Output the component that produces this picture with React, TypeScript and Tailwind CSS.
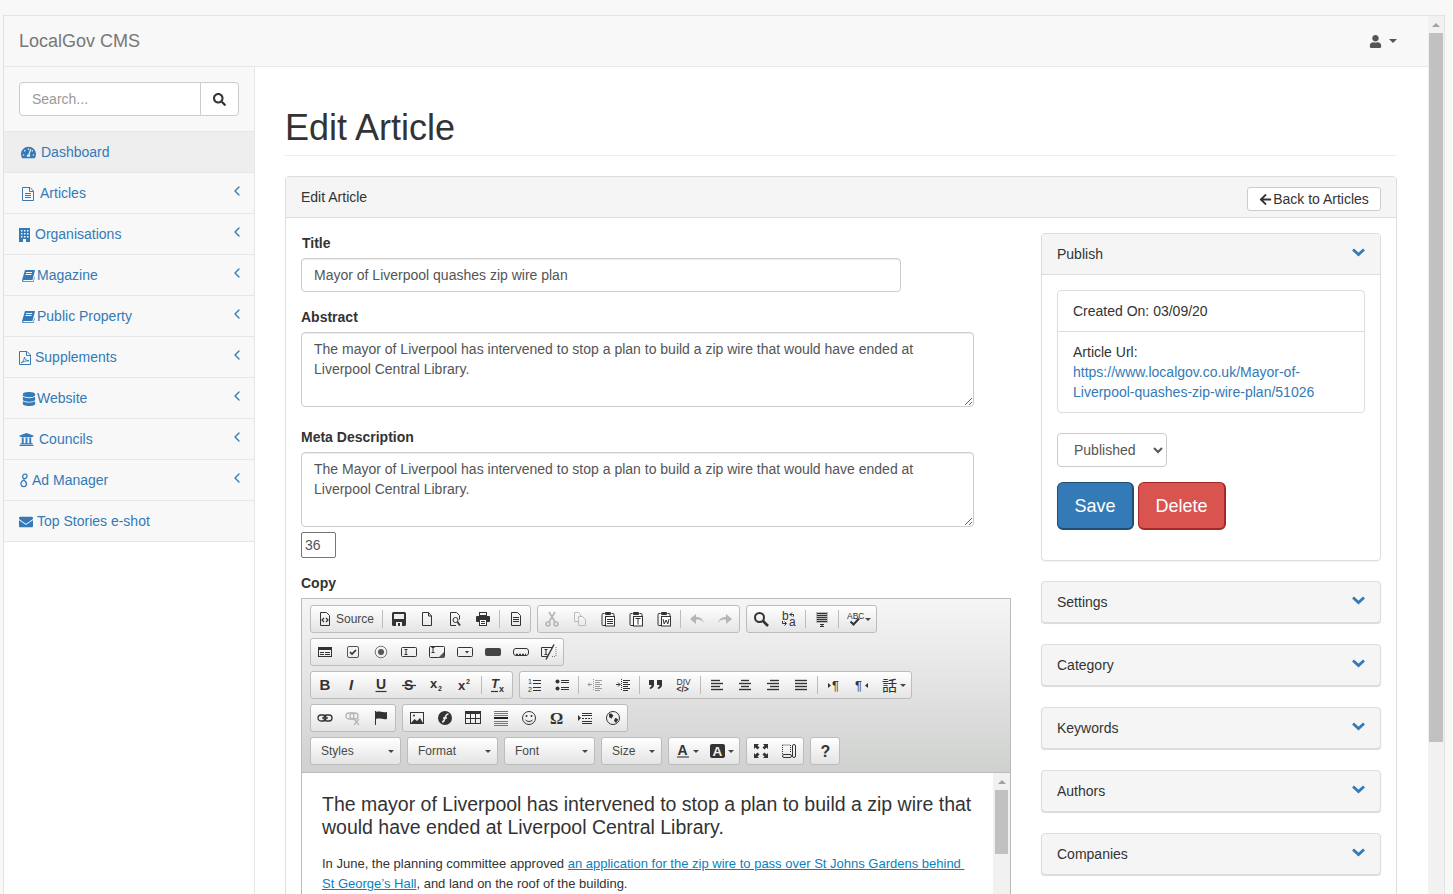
import React from "react";
import { FaDatabase, FaUniversity, FaEnvelope, FaSearch, FaUser, FaArrowLeft, FaTachometerAlt } from "react-icons/fa";
import { ChevronLeft } from "lucide-react";

const ARIAL = "Liberation Sans";
const T = ({ x, y, s, w, it, f, c, children }: any) => (
  <text x={x} y={y} fontSize={s} fontWeight={w || "normal"} fontStyle={it ? "italic" : "normal"} fontFamily={f || ARIAL} fill={c || "#333"} stroke="none">{children}</text>
);
const clip = (inner: React.ReactNode) => (
  <>
    <path d="M4.500 2.500H3a1 1 0 0 0-1 1v10a1 1 0 0 0 1 1h2M11.500 2.500H13a1 1 0 0 1 1 1V5" />
    <rect x="5" y="1" width="6" height="3" rx="1" fill="#333" stroke="none" />
    <rect x="5.500" y="5.500" width="9" height="9.500" fill="#fff" />
    {inner}
  </>
);
const lines = (arr: number[][], sw = 1, col = "#333") => arr.map((a, i) => (
  <path key={i} d={`M${a[0]} ${a[2]}.5H${a[1]}`} strokeWidth={sw} stroke={col} />
));

const ICONS: Record<string, React.ReactNode> = {
  source: <><path d="M3.500 1.500h6l3 3v10h-9z" /><path d="M7 7 5 9l2 2M9 7l2 2-2 2" strokeWidth="1.200" /></>,
  save: <><path d="M1 2.500A1.500 1.500 0 0 1 2.500 1h11A1.500 1.500 0 0 1 15 2.500v11a1.500 1.500 0 0 1-1.500 1.500h-11A1.500 1.500 0 0 1 1 13.500z" fill="#333" stroke="none" /><rect x="3" y="3" width="10" height="5" fill="#eee" stroke="none" /><rect x="5" y="11" width="6" height="4" fill="#eee" stroke="none" /><rect x="7" y="12" width="2" height="3" fill="#333" stroke="none" /></>,
  newpage: <path d="M3.500 1.500h6l3 3.500v9.500h-9zM9.500 1.500V5h3" />,
  preview: <><path d="M9 14.500H3.500v-13h6l3 3v4" /><circle cx="8.500" cy="9" r="2.500" /><path d="m10.500 11 2.500 3.500" strokeWidth="1.800" /></>,
  print: <><rect x="4.500" y="1.500" width="7" height="3" /><rect x="1" y="5" width="14" height="6" rx="1" fill="#333" stroke="none" /><rect x="4.500" y="8.500" width="7" height="6" fill="#fff" />{lines([[6, 10, 10], [6, 10, 12]])}</>,
  templates: <><path d="M3.500 1.500h6l3 3v10h-9z" />{lines([[5, 11, 6], [5, 11, 8], [5, 11, 10]])}</>,
  cut: <g stroke="#b5b5b5"><path d="m5 1 6 10M11 1 5 11" strokeWidth="1.600" /><circle cx="4" cy="13" r="2" strokeWidth="1.600" /><circle cx="12" cy="13" r="2" strokeWidth="1.600" /></g>,
  copy: <g stroke="#bbb"><path d="M6.500 10.500h-4v-9h4l2 2v2" /><path d="M6.500 5.500h4l3 3v6h-7z" /></g>,
  paste: clip(lines([[7, 13, 8], [7, 13, 10], [7, 13, 12]])),
  pastetext: clip(<path d="M7.500 7.500h5M10 7.500v6" />),
  pasteword: clip(<path d="m7 8 1.200 5L10 9l1.800 4L13 8" />),
  undo: <path d="M1 8l6-5v3c4 0 7 2 8 6-2-3-4-3.500-8-3.500V13z" fill="#b5b5b5" stroke="none" />,
  redo: <path d="M15 8 9 3v3c-4 0-7 2-8 6 2-3 4-3.500 8-3.500V13z" fill="#b5b5b5" stroke="none" />,
  find: <><circle cx="6.500" cy="6.500" r="4.500" strokeWidth="2" /><path d="m10 10 5 5" strokeWidth="2.600" /></>,
  replace: <><T x="1" y="8.500" s="12">b</T><T x="8" y="15" s="12">a</T><path d="M8.500 3.500h4v2M11 1.500l-2 2 2 2M1.500 10v2.500H5M3.500 10.500l2 2-2 2" /></>,
  selectall: <><rect x="2" y="1" width="12" height="11" fill="#bbb" stroke="none" />{lines([[3, 13, 2], [3, 13, 4], [3, 13, 6], [3, 13, 8], [3, 13, 10]])}<path d="M6 13.500h4M8 13.500v2M6 15.500h4" /></>,
  spell: <><T x="0" y="7.500" s="8.500">ABC</T><path d="m3.500 10.500 3 3L12 7.500" strokeWidth="2" /></>,
  form: <><rect x="1.500" y="3.500" width="13" height="9" /><rect x="1" y="3" width="14" height="3" fill="#333" stroke="none" /><rect x="3" y="8" width="4" height="1" fill="#333" stroke="none" /><rect x="8" y="8" width="5" height="1" fill="#333" stroke="none" /><rect x="3" y="10" width="4" height="1" fill="#333" stroke="none" /><rect x="8" y="10" width="5" height="1" fill="#333" stroke="none" /></>,
  checkbox: <><rect x="2.500" y="2.500" width="11" height="11" rx="1.500" stroke="#555" /><path d="m5 8 2 2 4-4" strokeWidth="1.700" /></>,
  radio: <><circle cx="8" cy="8" r="5.800" stroke="#777" /><circle cx="8" cy="8" r="3" fill="#555" stroke="none" /></>,
  textfield: <><rect x=".5" y="3.500" width="15" height="9" rx="1" /><path d="M3.500 5.500h3M5 5.500v5M3.500 10.500h3" /></>,
  textarea: <><rect x=".5" y="2.500" width="15" height="11" rx="1" /><path d="M2.500 3.500h3M4 3.500v5M2.500 8.500h3" /><path d="M15 8v6H9z" fill="#555" stroke="none" /></>,
  select: <><rect x=".5" y="3.500" width="15" height="9" rx="1" /><path d="M8 7h4l-2 2.500z" fill="#333" stroke="none" /></>,
  button: <rect x="0" y="4" width="16" height="8" rx="2" fill="#444" stroke="none" />,
  imagebutton: <><rect x=".5" y="4.500" width="15" height="7" rx="2.500" /><path d="M3 10.500h10" strokeDasharray="2 1" strokeWidth="1.500" /></>,
  hidden: <><path d="M.5 3.500h11M.5 3.500v9h6" /><path d="M11 12.500h4M15 3v10" strokeDasharray="1 1" stroke="#777" /><path d="M3.500 5.500h3M5 5.500v5M3.500 10.500h3" /><path d="m5 15.500 8-15" strokeWidth="1.400" /></>,
  bold: <T x="2.500" y="13" s="15" w="bold">B</T>,
  italic: <T x="4" y="13" s="15" w="bold" it>I</T>,
  underline: <><T x="3" y="12" s="14" w="bold">U</T><path d="M2.500 14.500h11" strokeWidth="1.200" /></>,
  strike: <><T x="3" y="13" s="14" w="bold">S</T><path d="M1 8.500h14" strokeWidth="1.200" /></>,
  sub: <><T x="1" y="11" s="13" w="bold">x</T><T x="9" y="14" s="7" w="bold">2</T></>,
  sup: <><T x="1" y="13" s="13" w="bold">x</T><T x="9" y="7" s="7" w="bold">2</T></>,
  removeformat: <><T x="1" y="11" s="13" w="bold" it>T</T><T x="9" y="15" s="9" w="bold">x</T><path d="M1 14.500h7" strokeWidth="1.200" /></>,
  numbered: <><T x="2" y="7" s="7">1</T><T x="2" y="14.500" s="7">2</T>{lines([[7, 15, 3], [7, 15, 6], [7, 15, 10], [7, 15, 13]])}</>,
  bulleted: <><circle cx="3.500" cy="4.500" r="2" fill="#333" stroke="none" /><circle cx="3.500" cy="11.500" r="2" fill="#333" stroke="none" />{lines([[7, 15, 3], [7, 15, 5], [7, 15, 10], [7, 15, 12]])}</>,
  outdent: <g opacity=".45"><path d="M5 7.500H1m2-2-2 2 2 2" /><path d="M6.500 2v12" strokeDasharray="1 1" />{lines([[8, 15, 3], [8, 13, 5], [8, 15, 7], [8, 13, 9], [8, 15, 11], [8, 13, 13]])}</g>,
  indent: <><path d="M1 7.500h4m-2-2 2 2-2 2" /><path d="M6.500 2v12" strokeDasharray="1 1" />{lines([[8, 15, 3], [8, 13, 5], [8, 15, 7], [8, 13, 9], [8, 15, 11], [8, 13, 13]])}</>,
  quote: <><path d="M1 3h5v5c0 2-1.500 3.500-4 4l-.5-1.200c1.200-.5 2-1.400 2-2.800H1z" fill="#333" stroke="none" /><path d="M9 3h5v5c0 2-1.500 3.500-4 4l-.5-1.200c1.200-.5 2-1.400 2-2.800H9z" fill="#333" stroke="none" /></>,
  creatediv: <><T x=".5" y="7.500" s="8.500">DIV</T><T x=".5" y="15" s="8.500" w="bold">&lt;/&gt;</T></>,
  left: lines([[2, 11, 3], [2, 14, 6], [2, 11, 9], [2, 14, 12]], 1.400),
  center: lines([[4, 12, 3], [2, 14, 6], [4, 12, 9], [2, 14, 12]], 1.400),
  right: lines([[5, 14, 3], [2, 14, 6], [5, 14, 9], [2, 14, 12]], 1.400),
  justify: lines([[2, 14, 3], [2, 14, 6], [2, 14, 9], [2, 14, 12]], 1.400),
  ltr: <><path d="m2 6 3 2.500L2 11z" fill="#333" stroke="none" /><T x="6" y="13" s="13">¶</T></>,
  rtl: <><T x="1" y="13" s="13">¶</T><path d="M14 6l-3 2.500 3 2.500z" fill="#333" stroke="none" /></>,
  link: <><rect x="1" y="5" width="8" height="6" rx="3" strokeWidth="1.300" /><rect x="7" y="5" width="8" height="6" rx="3" strokeWidth="1.300" /><path d="M5 8h6" strokeWidth="1.300" /></>,
  unlink: <g stroke="#b5b5b5"><rect x="1" y="3" width="8" height="6" rx="3" strokeWidth="1.300" /><rect x="5" y="3" width="8" height="6" rx="3" strokeWidth="1.300" /><path d="m9 9 5 6m0-6-5 6" strokeWidth="1.300" /></g>,
  anchor: <><path d="M2.500 1v14" /><path d="M3 2c3-1.500 6 1 11 0v7c-4 1-7-1.500-11 0z" fill="#333" stroke="none" /></>,
  image: <><rect x="1.500" y="2.500" width="13" height="11" /><path d="m2 13 3.500-4 2.500 2 3-3 3 5z" fill="#333" stroke="none" /><circle cx="5" cy="5.500" r="1" fill="#333" stroke="none" /></>,
  flash: <><circle cx="8" cy="8" r="7" fill="#333" stroke="none" /><path d="M5 12c2 0 2.500-2 3-4s1-4 3.500-4M6 8h4" stroke="#eee" strokeWidth="1.500" /></>,
  table: <><rect x=".5" y="1.500" width="15" height="12" /><rect x="0" y="1" width="16" height="3" fill="#333" stroke="none" /><path d="M5.500 4v9M10.500 4v9M1 8.500h14" /></>,
  hr: <>{lines([[1, 15, 1], [1, 15, 3], [1, 15, 5], [1, 15, 11], [1, 15, 13], [1, 15, 15]], 1, "#777")}<rect x="1" y="7" width="14" height="2" fill="#222" stroke="none" /></>,
  smiley: <><circle cx="8" cy="8" r="6.500" /><circle cx="5.500" cy="6" r="1" fill="#333" stroke="none" /><circle cx="10.500" cy="6" r="1" fill="#333" stroke="none" /><path d="M4.500 10c1.500 2 5.500 2 7 0" /></>,
  omega: <T x="1" y="14" s="16.500" w="bold" f="Liberation Serif">Ω</T>,
  pagebreak: <><path d="m1 5 3 3-3 3z" fill="#333" stroke="none" />{lines([[5, 15, 3], [5, 15, 5]], 1)}<path d="M5 8.500h10" strokeDasharray="2 1" />{lines([[5, 15, 11], [5, 15, 13]], 1)}</>,
  iframe: <><circle cx="8" cy="8" r="6.500" /><path d="M4 4c2-1 3 0 4 1s-1 2-1 3-2 0-3-1zM10 8c2 0 3 1 3 2l-2 3-2-2z" fill="#333" stroke="none" /></>,
  textcolor: <><T x="2.500" y="11.500" s="14" w="bold">A</T><path d="M2 14h12" stroke="#888" strokeWidth="2" /></>,
  bgcolor: <><rect x="0" y="1" width="15" height="14" rx="2" fill="#333" stroke="none" /><T x="2.500" y="12.800" s="13.500" w="bold" c="#eee">A</T></>,
  maximize: <path d="M1 1h5L4.500 2.500l2 2-2 2-2-2L1 6zM15 1v5l-1.500-1.500-2 2-2-2 2-2L10 1zM1 15v-5l1.500 1.500 2-2 2 2-2 2L6 15zM15 15h-5l1.500-1.500-2-2 2-2 2 2L15 10z" fill="#333" stroke="none" />,
  showblocks: <><path d="M1.500 2v10M1.500 2h8M9.500 2v8" strokeDasharray="1 1" /><rect x="11.500" y="1.500" width="3" height="13" rx="1.500" /><rect x="1.500" y="11.500" width="9" height="3" rx="1.500" /></>,
  about: <T x="3.500" y="13.500" s="16" w="bold">?</T>,
};

const Ico = ({ n }: { n: string }) => (
  <svg width="16" height="16" viewBox="0 0 16 16" fill="none" stroke="#333" strokeWidth="1" overflow="visible" className="shrink-0">{ICONS[n]}</svg>
);
const Caret = () => <span className="w-0 h-0 border-x-[3px] border-x-transparent border-t-[3px] border-t-[#474747] shrink-0" />;
const Btn = ({ n }: { n: string }) => (
  <span className="w-[28px] h-[26px] flex items-center justify-center"><Ico n={n} /></span>
);
const ArrowBtn = ({ n, cjk }: { n?: string; cjk?: string }) => (
  <span className="w-[35px] h-[26px] flex items-center pl-[6px] gap-[2px]">
    {n ? <Ico n={n} /> : <span className="w-[16px] text-[15px] leading-[16px] text-[#333] font-['Noto_Sans_CJK_JP',sans-serif]">{cjk}</span>}
    <Caret />
  </span>
);
const Sep = () => <span className="w-px h-[18px] mx-[2px] bg-[#bcbcbc]" />;
const Group = ({ children }: { children: React.ReactNode }) => (
  <div className="flex items-center h-[28px] border border-[#bcbcbc] rounded-[3px] bg-gradient-to-b from-white to-[#e4e4e4]">{children}</div>
);
const Combo = ({ label, w }: { label: string; w: string }) => (
  <div className={`${w} h-[28px] flex items-center justify-between pl-[10px] pr-[6px] text-[12px] text-[#484848] border border-[#bcbcbc] rounded-[3px] bg-gradient-to-b from-white to-[#e4e4e4]`}>
    <span>{label}</span><Caret />
  </div>
);
const Row = ({ children }: { children: React.ReactNode }) => <div className="flex gap-[6px]">{children}</div>;

const Toolbar = () => (
  <div className="flex flex-col gap-[5px] pt-[6px] pb-[7px] pl-[8px] h-[174px] bg-gradient-to-b from-[#f5f5f5] to-[#cfd1cf] border-b border-[#bcbcbc]">
    <Row>
      <Group>
        <span className="w-[69px] h-[26px] flex items-center pl-[6px] gap-[3px] text-[12px] text-[#484848]"><Ico n="source" /><span>Source</span></span>
        <Sep /><Btn n="save" /><Btn n="newpage" /><Btn n="preview" /><Btn n="print" /><Sep /><Btn n="templates" />
      </Group>
      <Group><Btn n="cut" /><Btn n="copy" /><Btn n="paste" /><Btn n="pastetext" /><Btn n="pasteword" /><Sep /><Btn n="undo" /><Btn n="redo" /></Group>
      <Group><Btn n="find" /><Btn n="replace" /><Sep /><Btn n="selectall" /><Sep /><ArrowBtn n="spell" /></Group>
    </Row>
    <Row>
      <Group>{["form", "checkbox", "radio", "textfield", "textarea", "select", "button", "imagebutton", "hidden"].map(n => <Btn key={n} n={n} />)}</Group>
    </Row>
    <Row>
      <Group>{["bold", "italic", "underline", "strike", "sub", "sup"].map(n => <Btn key={n} n={n} />)}<Sep /><Btn n="removeformat" /></Group>
      <Group>
        <Btn n="numbered" /><Btn n="bulleted" /><Sep /><Btn n="outdent" /><Btn n="indent" /><Sep /><Btn n="quote" /><Btn n="creatediv" /><Sep />
        <Btn n="left" /><Btn n="center" /><Btn n="right" /><Btn n="justify" /><Sep /><Btn n="ltr" /><Btn n="rtl" /><ArrowBtn cjk="話" />
      </Group>
    </Row>
    <Row>
      <Group><Btn n="link" /><Btn n="unlink" /><Btn n="anchor" /></Group>
      <Group>{["image", "flash", "table", "hr", "smiley", "omega", "pagebreak", "iframe"].map(n => <Btn key={n} n={n} />)}</Group>
    </Row>
    <Row>
      <Combo label="Styles" w="w-[91px]" /><Combo label="Format" w="w-[91px]" /><Combo label="Font" w="w-[91px]" /><Combo label="Size" w="w-[61px]" />
      <Group><ArrowBtn n="textcolor" /><ArrowBtn n="bgcolor" /></Group>
      <Group><Btn n="maximize" /><Btn n="showblocks" /></Group>
      <Group><Btn n="about" /></Group>
    </Row>
  </div>
);

const BLUE = "#337ab7";
const Eight = () => (
  <svg width="9" height="15" viewBox="0 0 9 15" fill="none" stroke={BLUE} strokeWidth="1.300">
    <path d="M5.800 1.200C3.500.8 2.300 2.500 2.800 4.200 3.300 6 5.300 6 6.500 4.500 7.500 3 7 1.300 5.800 1.200ZM3.800 6.800C1.500 8 .5 10 1.200 12c.8 2 3.500 2.200 4.800.5 1.200-1.600.3-3.500-2.200-5.700Z" />
  </svg>
);
const DocIcon = () => (
  <svg width="12" height="14" viewBox="0 0 12 14" fill="none" stroke={BLUE}>
    <path d="M.5.500h7.500l3.500 3.500v9.500H.5zM7.500.500v4h4M3 6.500h6M3 8.500h6M3 10.500h6" />
  </svg>
);
const BuildingIcon = () => (
  <svg width="11" height="14" viewBox="0 0 11 14">
    <rect width="11" height="14" fill={BLUE} />
    {[2, 5, 8].flatMap(x => [2, 5, 8].map(y => <rect key={`${x}${y}`} x={x} y={y} width="1.500" height="1.500" fill="#f8f8f8" />))}
    <rect x="4" y="11" width="3" height="3" fill="#f8f8f8" />
  </svg>
);
const BookIcon = () => (
  <svg width="13" height="12" viewBox="0 0 13 12">
    <path d="M3 0h9.500c.4 0 .5.300.4.700L10.600 9.500c-.1.400-.4.500-.8.500H2c-.7 0-1 .3-1 .6s.3.600.8.600h9.400l1-4.300.6.400-1.200 4.700H1.500C.5 12 0 11.300 0 10.200z" fill={BLUE} />
    <path d="M4 2.500h6M3.500 4.500h6" stroke="#f8f8f8" strokeWidth="1" />
  </svg>
);
const PdfIcon = () => (
  <svg width="12" height="14" viewBox="0 0 12 14" fill="none" stroke={BLUE}>
    <path d="M.5.500h7.500l3.500 3.500v9.500H.5zM7.500.500v4h4" />
    <path d="M2 12c2-1 3-3 3.500-6 .5 2.500 1.500 3.500 4.500 3.800-3 0-5.500.5-8 2.200z" strokeWidth=".9" />
  </svg>
);
const ChevronD = () => (
  <svg width="13" height="9" viewBox="0 0 13 9" fill="none" stroke={BLUE} strokeWidth="2.800" className="mb-[3px]">
    <path d="m1 1.500 5.500 5 5.500-5" />
  </svg>
);

const NAV = [
  { label: "Articles", icon: <DocIcon />, box: "w-[21px] pl-[3px]" },
  { label: "Organisations", icon: <BuildingIcon />, box: "w-[16px]" },
  { label: "Magazine", icon: <BookIcon />, box: "w-[18px] pl-[3px]" },
  { label: "Public Property", icon: <BookIcon />, box: "w-[18px] pl-[3px]" },
  { label: "Supplements", icon: <PdfIcon />, box: "w-[16px]" },
  { label: "Website", icon: <FaDatabase size={14} />, box: "w-[18px] pl-[3px]" },
  { label: "Councils", icon: <FaUniversity size={15} />, box: "w-[20px]" },
  { label: "Ad Manager", icon: <Eight />, box: "w-[13px] pl-[1px]" },
];

const Sidebar = () => (
  <aside className="w-[251px] shrink-0 border-r border-[#e7e7e7] self-stretch">
    <div className="bg-[#f8f8f8] text-[14px] text-[#337ab7]">
      <div className="h-[65px] pt-[15px] px-[15px] border-b border-[#e7e7e7]">
        <div className="flex h-[34px]">
          <div className="flex-1 border border-[#ccc] rounded-l-[4px] bg-white px-[12px] leading-[32px] text-[#999]">Search...</div>
          <div className="w-[39px] -ml-px border border-[#ccc] rounded-r-[4px] bg-white flex items-center justify-center text-[#333]"><FaSearch size={13} /></div>
        </div>
      </div>
      <div className="h-[41px] bg-[#eee] border-b border-[#e7e7e7] flex items-center px-[15px] pt-px">
        <span className="w-[22px] pl-[2px]"><FaTachometerAlt size={15} /></span><span>Dashboard</span>
      </div>
      {NAV.map(it => (
        <div key={it.label} className="h-[41px] border-b border-[#e7e7e7] flex items-center pl-[15px] pr-[9px] pt-px">
          <span className={`${it.box} shrink-0 flex`}>{it.icon}</span>
          <span className="flex-1">{it.label}</span>
          <ChevronLeft size={16} strokeWidth={2} className="mb-[6px]" />
        </div>
      ))}
      <div className="h-[41px] border-b border-[#e7e7e7] flex items-center pl-[15px] pt-px">
        <span className="w-[18px]"><FaEnvelope size={14} /></span><span>Top Stories e-shot</span>
      </div>
    </div>
  </aside>
);

const Label = ({ children, cls = "" }: { children: React.ReactNode; cls?: string }) => (
  <label className={`block font-bold text-[14px] leading-[20px] text-[#333] mb-[5px] ${cls}`}>{children}</label>
);
const fieldCls = "block border border-[#ccc] rounded-[4px] text-[14px] leading-[20px] text-[#555] px-[12px] py-[6px] bg-white shadow-[inset_0_1px_1px_rgba(0,0,0,0.075)] outline-none";

const Editor = () => (
  <div className="w-[710px] border-x border-t border-[#bcbcbc]">
    <Toolbar />
    <div className="flex h-[300px] bg-white">
      <div className="flex-1 min-w-0 px-[20px] pt-[20px] text-[#333]">
        <p className="text-[19.5px] leading-[23px]">The mayor of Liverpool has intervened to stop a plan to build a zip wire that would have ended at Liverpool Central Library.</p>
        <p className="mt-[15px] text-[13px] leading-[20px]">
          In June, the planning committee approved <a className="text-[#0782c1] underline">an application for the zip wire to pass over St Johns Gardens behind&nbsp;<br />St George’s Hall</a>, and land on the roof of the building.
        </p>
      </div>
      <div className="w-[17px] shrink-0 bg-[#f1f1f1] flex flex-col items-center">
        <span className="mt-[7px] w-0 h-0 border-x-[4px] border-x-transparent border-b-[4px] border-b-[#a3a3a3]" />
        <span className="mt-[6px] w-[13px] h-[64px] bg-[#c1c1c1]" />
      </div>
    </div>
  </div>
);

const Collapse = ({ title }: { title: string }) => (
  <div className="h-[42px] border border-[#ddd] rounded-[4px] bg-[#f5f5f5] shadow-[0_1px_1px_rgba(0,0,0,0.15)] flex items-center justify-between pl-[15px] pr-[15px] text-[14px] text-[#333]">
    <span>{title}</span><ChevronD />
  </div>
);

const Publish = () => (
  <div className="border border-[#ddd] rounded-[4px] shadow-[0_1px_1px_rgba(0,0,0,0.05)] text-[14px] text-[#333]">
    <div className="h-[41px] bg-[#f5f5f5] border-b border-[#ddd] rounded-t-[3px] flex items-center justify-between px-[15px]">
      <span>Publish</span><ChevronD />
    </div>
    <div className="px-[15px] pt-[15px] pb-[30px]">
      <div className="border border-[#ddd] rounded-[4px] leading-[20px]">
        <div className="px-[15px] py-[10px] border-b border-[#ddd]">Created On: 03/09/20</div>
        <div className="px-[15px] py-[10px]">
          Article Url:<br />
          <a className="text-[#337ab7]">https://www.localgov.co.uk/Mayor-of-<br />Liverpool-quashes-zip-wire-plan/51026</a>
        </div>
      </div>
      <select defaultValue="Published" className="mt-[20px] w-[110px] h-[34px] border border-[#ccc] rounded-[4px] bg-white text-[14px] text-[#555] px-[12px]">
        <option>Published</option>
      </select>
      <div className="mt-[15px] flex gap-[4px] text-[18px] text-white">
        <button className="w-[77px] h-[48px] pt-px rounded-[6px] bg-[#337ab7] border border-[#204d74] border-b-[2px] border-r-[2px]">Save</button>
        <button className="w-[88px] h-[48px] pt-px rounded-[6px] bg-[#d9534f] border border-[#a52a26] border-b-[2px] border-r-[2px]">Delete</button>
      </div>
    </div>
  </div>
);

const Main = () => (
  <main className="flex-1 min-w-0 bg-white pl-[30px] pr-[31px] pt-[41px]">
    <div className="border-b border-[#eee] pb-[7px] mb-[20px]">
      <h1 className="text-[36px] leading-[40px] text-[#333]">Edit Article</h1>
    </div>
    <div className="border border-[#ddd] rounded-[4px]">
      <div className="h-[41px] bg-[#f5f5f5] border-b border-[#ddd] rounded-t-[3px] flex items-center justify-between pl-[15px] pr-[15px] text-[14px] text-[#333]">
        <span>Edit Article</span>
        <button className="mt-[3px] w-[134px] h-[24px] pt-px bg-white border border-[#ccc] rounded-[3px] flex items-center justify-center gap-px">
          <FaArrowLeft size={13} /><span>Back to Articles</span>
        </button>
      </div>
      <div className="flex px-[15px] pt-[15px] pb-[40px]">
        <div className="flex-1 min-w-0">
          <Label cls="ml-px">Title</Label>
          <input readOnly value="Mayor of Liverpool quashes zip wire plan" className={`${fieldCls} w-[600px] h-[34px]`} />
          <Label cls="mt-[15px]">Abstract</Label>
          <textarea readOnly value="The mayor of Liverpool has intervened to stop a plan to build a zip wire that would have ended at Liverpool Central Library." className={`${fieldCls} w-[673px] h-[75px]`} />
          <Label cls="mt-[20px]">Meta Description</Label>
          <textarea readOnly value="The Mayor of Liverpool has intervened to stop a plan to build a zip wire that would have ended at Liverpool Central Library." className={`${fieldCls} w-[673px] h-[75px]`} />
          <input readOnly value="36" className="block mt-[5px] w-[35px] h-[26px] border border-[#767676] rounded-[2px] px-[3px] text-[14px] text-[#555] outline-none" />
          <Label cls="mt-[15px]">Copy</Label>
          <Editor />
        </div>
        <div className="w-[340px] shrink-0 flex flex-col">
          <Publish />
          <div className="mt-[20px] flex flex-col gap-[21px]">
            {["Settings", "Category", "Keywords", "Authors", "Companies"].map(t => <Collapse key={t} title={t} />)}
          </div>
        </div>
      </div>
    </div>
  </main>
);

export default function App() {
  return (
    <div className="h-[894px] overflow-hidden bg-[#f8f8f8] pt-[15px] pl-[3px] pr-[8px] font-['Liberation_Sans',Arial,sans-serif]">
      <div className="h-[900px] flex border-l border-t border-r border-[#e3e3e3] bg-white">
        <div className="flex-1 min-w-0 flex flex-col">
          <header className="h-[51px] shrink-0 bg-[#f8f8f8] border-b border-[#e7e7e7] flex items-center justify-between pl-[15px] pr-[31px]">
            <span className="text-[18px] text-[#777]">LocalGov CMS</span>
            <span className="flex items-center gap-[7px] text-[#555]"><FaUser size={13} /><span className="w-0 h-0 border-x-[4px] border-x-transparent border-t-[4px] border-t-[#555]" /></span>
          </header>
          <div className="flex-1 flex min-h-0">
            <Sidebar />
            <Main />
          </div>
        </div>
        <div className="w-[16px] shrink-0 bg-[#f1f1f1] flex flex-col items-center">
          <span className="mt-[7px] w-0 h-0 border-x-[4px] border-x-transparent border-b-[4px] border-b-[#a3a3a3]" />
          <span className="mt-[6px] w-[14px] h-[709px] bg-[#c1c1c1]" />
        </div>
      </div>
    </div>
  );
}
